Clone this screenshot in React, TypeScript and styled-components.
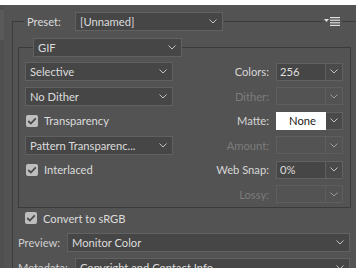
import * as React from 'react';
import styled, { createGlobalStyle } from 'styled-components';

const GlobalStyle = createGlobalStyle`
	html, body {
		margin: 0;
		padding: 0;
		background: #ffffff;
	}
	body {
		width: 356px;
		height: 268px;
		overflow: hidden;
	}
`;

const LINE = '#3b3b3b';

const Panel = styled.div`
	margin-top: 5px;
	height: 263px;
	display: flex;
	background: #535353;
	font-family: Lato, "Liberation Sans", sans-serif;
	font-size: 11.2px;
	color: #dcdcdc;
	overflow: hidden;
`;

const ScrollStrip = styled.div`
	width: 4px;
	flex: none;
	background: #4f4f4f;
	padding-top: 5px;

	&::before {
		content: '';
		display: block;
		height: 30px;
		background: #5a5a5a;
	}
`;

const Main = styled.div`
	flex: 1;
	min-width: 0;
	padding: 7px 0 0 8px;
`;

const OuterGroup = styled.fieldset`
	margin: 0;
	padding: 0 0 0 5px;
	min-width: 0;
	height: 300px;
	border: 1px solid ${LINE};
	border-right: none;
	border-bottom: none;
`;

const HeaderLegend = styled.legend`
	margin-left: 6px;
	padding: 0;
	width: calc(100% - 6px);
	height: 19px;
	display: flex;
	align-items: center;
`;

const PresetLabel = styled.span`
	width: 51px;
	padding-left: 3px;
	box-sizing: border-box;
	flex: none;
`;

const Rule = styled.div<{ $width?: number }>`
	height: 1px;
	background: ${LINE};
	flex: ${p => (p.$width ? `0 0 ${p.$width}px` : '1')};
	margin-left: 1px;
`;

const MenuButton = styled.div`
	width: 18px;
	flex: none;
	display: flex;
	justify-content: center;
	align-items: center;
	margin-left: 1px;
`;

const Select = styled.div<{ $width?: number }>`
	height: 19px;
	box-sizing: border-box;
	${p => (p.$width ? `width: ${p.$width}px; flex: none;` : 'flex: 1;')}
	background: #464646;
	border: 1px solid #616161;
	display: flex;
	align-items: center;
	padding: 0 5px 0 4px;
	white-space: nowrap;

	span {
		flex: 1;
		overflow: hidden;
	}
`;

const InnerGroup = styled.fieldset`
	margin: 7px 5px 0 0;
	padding: 5px 7px 3px 6px;
	min-width: 0;
	border: 1px solid ${LINE};
`;

const InnerLegend = styled.legend`
	margin-left: 8px;
	padding: 0;
	display: flex;
`;

const OptionsGrid = styled.div`
	display: grid;
	grid-template-columns: 148px 1fr;
	grid-auto-rows: 19px;
	row-gap: 5.5px;
`;

const LeftCell = styled.div`
	display: flex;
	align-items: center;
`;

const RightCell = styled.div`
	grid-column: 2;
	display: flex;
	justify-content: flex-end;
	align-items: center;
`;

const FieldLabel = styled.span<{ $disabled?: boolean }>`
	margin-right: 7px;
	color: ${p => (p.$disabled ? '#7c7c7c' : '#d6d6d6')};
`;

const FieldInput = styled.div<{ $disabled?: boolean; $light?: boolean }>`
	width: 50px;
	height: 18px;
	box-sizing: border-box;
	padding-left: 3px;
	display: flex;
	align-items: center;
	justify-content: ${p => (p.$light ? 'center' : 'flex-start')};
	background: ${p => (p.$light ? '#ffffff' : p.$disabled ? 'transparent' : '#464646')};
	color: ${p => (p.$light ? '#1a1a1a' : '#dedede')};
	border: 1px solid ${p => (p.$light ? '#ffffff' : p.$disabled ? '#5e5e5e' : '#616161')};
`;

const FieldButton = styled.div<{ $disabled?: boolean }>`
	width: 17px;
	height: 18px;
	box-sizing: border-box;
	display: flex;
	align-items: center;
	justify-content: center;
	background: ${p => (p.$disabled ? 'transparent' : '#4a4a4a')};
	border: 1px solid ${p => (p.$disabled ? '#5e5e5e' : '#616161')};
	border-left: none;
`;

const CheckRow = styled.label`
	display: flex;
	align-items: center;
	gap: 6px;
	padding-left: 1px;
`;

const Box = styled.span`
	width: 12px;
	height: 12px;
	border-radius: 2px;
	background: #bebebe;
	display: flex;
	align-items: center;
	justify-content: center;
`;

const SrgbRow = styled(CheckRow)`
	height: 19px;
	margin-top: 1px;
	padding-left: 7px;
`;

const BottomRow = styled.div<{ $labelWidth: number }>`
	display: flex;
	align-items: center;
	height: 19px;
	margin: 5px 6px 0 0;

	> span:first-child {
		width: ${p => p.$labelWidth}px;
		flex: none;
		color: #cfcfcf;
	}
`;

const Chevron = ({ dim }: { dim?: boolean }) => (
	<svg width="8" height="5" viewBox="0 0 8 5">
		<polyline points="0.5,0.5 4,4 7.5,0.5" fill="none" stroke={dim ? '#9a9a9a' : '#c2c2c2'} strokeWidth="1" />
	</svg>
);

const MenuIcon = () => (
	<svg width="16" height="9" viewBox="0 0 16 9">
		<polygon points="0,2 5,2 2.5,5" fill="#e0e0e0" />
		<rect x="6" y="0" width="10" height="1.2" fill="#e0e0e0" />
		<rect x="6" y="2.6" width="10" height="1.2" fill="#e0e0e0" />
		<rect x="6" y="5.2" width="10" height="1.2" fill="#e0e0e0" />
		<rect x="6" y="7.8" width="10" height="1.2" fill="#e0e0e0" />
	</svg>
);

const Check = () => (
	<svg width="10" height="8" viewBox="0 0 10 8">
		<polyline points="1.2,4 3.8,6.5 8.8,1.3" fill="none" stroke="#4a4a4a" strokeWidth="1.8" />
	</svg>
);

const Dropdown = ({ value, width }: { value: string; width?: number }) => (
	<Select $width={width}>
		<span>{value}</span>
		<Chevron />
	</Select>
);

const Checkbox = ({ label }: { label: string }) => (
	<CheckRow>
		<Box><Check /></Box>
		{label}
	</CheckRow>
);

const Field = ({ label, value, disabled, light }: { label: string; value?: string; disabled?: boolean; light?: boolean }) => (
	<RightCell>
		<FieldLabel $disabled={disabled}>{label}</FieldLabel>
		<FieldInput $disabled={disabled} $light={light}>{value}</FieldInput>
		<FieldButton $disabled={disabled}><Chevron dim={disabled} /></FieldButton>
	</RightCell>
);

export default function App() {
	return (
		<>
			<GlobalStyle />
			<Panel>
				<ScrollStrip />
				<Main>
					<OuterGroup>
						<HeaderLegend>
							<PresetLabel>Preset:</PresetLabel>
							<Dropdown value="[Unnamed]" width={148} />
							<Rule />
							<MenuButton><MenuIcon /></MenuButton>
							<Rule $width={14} />
						</HeaderLegend>

						<InnerGroup>
							<InnerLegend>
								<Dropdown value="GIF" width={149} />
							</InnerLegend>
							<OptionsGrid>
								<LeftCell><Dropdown value="Selective" width={148} /></LeftCell>
								<Field label="Colors:" value="256" />
								<LeftCell><Dropdown value="No Dither" width={148} /></LeftCell>
								<Field label="Dither:" disabled />
								<LeftCell><Checkbox label="Transparency" /></LeftCell>
								<Field label="Matte:" value="None" light />
								<LeftCell><Dropdown value="Pattern Transparenc..." width={148} /></LeftCell>
								<Field label="Amount:" disabled />
								<LeftCell><Checkbox label="Interlaced" /></LeftCell>
								<Field label="Web Snap:" value="0%" />
								<Field label="Lossy:" disabled />
							</OptionsGrid>
						</InnerGroup>

						<SrgbRow>
							<Box><Check /></Box>
							Convert to sRGB
						</SrgbRow>
						<BottomRow $labelWidth={49}>
							<span>Preview:</span>
							<Dropdown value="Monitor Color" />
						</BottomRow>
						<BottomRow $labelWidth={57} style={{ marginTop: 6 }}>
							<span>Metadata:</span>
							<Dropdown value="Copyright and Contact Info" />
						</BottomRow>
					</OuterGroup>
				</Main>
			</Panel>
		</>
	);
}
